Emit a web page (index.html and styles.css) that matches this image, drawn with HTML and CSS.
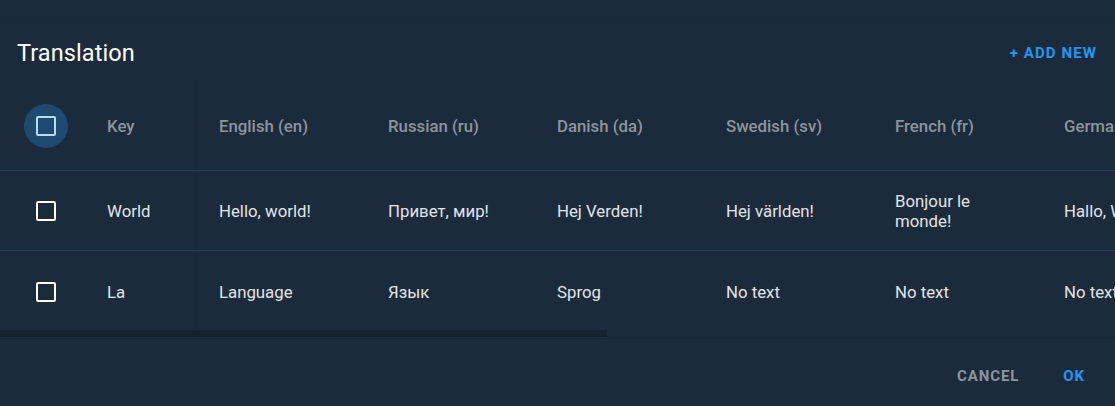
FILE: index.html
```html
<!DOCTYPE html>
<html>
<head>
<meta charset="utf-8">
<link rel="stylesheet" href="styles.css">
</head>
<body>
<div class="dialog">
  <div class="topline"></div>
  <div class="titlebar">
    <h1 class="title">Translation</h1>
    <button class="add-btn">+ Add new</button>
  </div>
  <div class="table-wrap">
    <div class="table">
      <div class="row head">
        <div class="cell chk"><span class="chk-halo"><span class="box box-head"></span></span></div>
        <div class="cell key">Key</div>
        <div class="cell lang">English (en)</div>
        <div class="cell lang">Russian (ru)</div>
        <div class="cell lang">Danish (da)</div>
        <div class="cell lang">Swedish (sv)</div>
        <div class="cell lang">French (fr)</div>
        <div class="cell lang">German (de)</div>
        <div class="cell lang">Spanish (es)</div>
      </div>
      <div class="row">
        <div class="cell chk"><span class="chk-halo plain"><span class="box"></span></span></div>
        <div class="cell key">World</div>
        <div class="cell lang">Hello, world!</div>
        <div class="cell lang">Привет, мир!</div>
        <div class="cell lang">Hej Verden!</div>
        <div class="cell lang">Hej världen!</div>
        <div class="cell lang">Bonjour le monde!</div>
        <div class="cell lang">Hallo, Welt!</div>
        <div class="cell lang">¡Hola, mundo!</div>
      </div>
      <div class="row last">
        <div class="cell chk"><span class="chk-halo plain"><span class="box"></span></span></div>
        <div class="cell key">La</div>
        <div class="cell lang">Language</div>
        <div class="cell lang">Язык</div>
        <div class="cell lang">Sprog</div>
        <div class="cell lang">No text</div>
        <div class="cell lang">No text</div>
        <div class="cell lang">No text</div>
        <div class="cell lang">No text</div>
      </div>
    </div>
    <div class="scrollbar"><div class="thumb"></div></div>
  </div>
  <div class="actions">
    <button class="act cancel">Cancel</button>
    <button class="act ok">OK</button>
  </div>
</div>
</body>
</html>
```

FILE: styles.css
```css
* { box-sizing: border-box; }
html, body {
  margin: 0;
  padding: 0;
  background: #1c2b3b;
  font-family: Roboto, "Liberation Sans", Arial, sans-serif;
  width: 1115px;
  height: 406px;
  overflow: hidden;
}
.dialog {
  width: 1115px;
  display: flex;
  flex-direction: column;
}
.topline {
  height: 20px;
  border-bottom: 1px solid #1a2837;
}
.titlebar {
  height: 60px;
  display: flex;
  align-items: center;
  justify-content: space-between;
  padding: 6px 18px 0 17px;
}
.title {
  margin: 0;
  font-size: 23.5px;
  font-weight: 400;
  color: #ffffff;
  letter-spacing: 0.1px;
}
.add-btn {
  background: none;
  border: 0;
  padding: 0;
  font-family: inherit;
  font-size: 15px;
  font-weight: 700;
  letter-spacing: 1.1px;
  text-transform: uppercase;
  color: #2196f3;
}
.table-wrap {
  width: 1115px;
  overflow: hidden;
  position: relative;
}
.table {
  display: flex;
  flex-direction: column;
  width: max-content;
}
.row {
  display: flex;
  height: 80px;
  border-bottom: 1px solid #25405a;
  padding-top: 1px;
}
.row.head {
  height: 91px;
  padding-top: 2px;
}
.row.last {
  border-bottom: 0;
  height: 79px;
  padding-top: 3px;
}
.cell {
  display: flex;
  align-items: center;
  font-size: 16.8px;
  font-weight: 400;
  line-height: 20px;
  color: #e1e5ea;
}
.head .cell {
  color: #8b959f;
  font-weight: 500;
}
.chk {
  width: 83px;
  padding-left: 24px;
}
.key {
  width: 113px;
  padding-left: 24px;
  border-right: 1px solid #192838;
}
.lang {
  width: 169px;
  padding: 0 23px;
}
.chk-halo {
  width: 44px;
  height: 44px;
  border-radius: 50%;
  background: #1f4a70;
  display: flex;
  align-items: center;
  justify-content: center;
}
.chk-halo.plain {
  background: transparent;
}
.box {
  width: 20px;
  height: 20px;
  border: 2px solid #ffffff;
  border-radius: 2px;
}
.box-head {
  border-color: #b5dcf8;
}
.scrollbar {
  height: 7px;
  background: transparent;
}
.thumb {
  width: 607px;
  height: 7px;
  background: #152230;
}
.actions {
  border-top: 1px solid #182737;
  margin-top: 1px;
  height: 66px;
  display: flex;
  justify-content: flex-end;
  align-items: center;
  padding: 8px 30px 0 0;
  gap: 44px;
}
.act {
  background: none;
  border: 0;
  padding: 0;
  font-family: inherit;
  font-size: 15px;
  font-weight: 700;
  letter-spacing: 0.9px;
  text-transform: uppercase;
}
.cancel { color: #8b959f; }
.ok { color: #2196f3; }
```
